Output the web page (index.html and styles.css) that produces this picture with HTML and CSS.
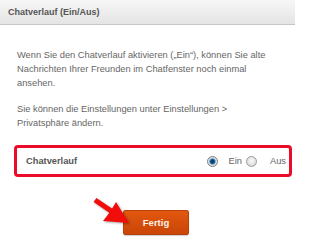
FILE: index.html
```html
<!DOCTYPE html>
<html lang="de">
<head>
<meta charset="utf-8">
<title>Chatverlauf</title>
<link rel="stylesheet" href="styles.css">
</head>
<body>
<div class="header">Chatverlauf (Ein/Aus)</div>
<div class="content">
  <p>Wenn Sie den Chatverlauf aktivieren („Ein“), können Sie alte Nachrichten Ihrer Freunden im Chatfenster noch einmal ansehen.</p>
  <p>Sie können die Einstellungen unter Einstellungen &gt; Privatsphäre ändern.</p>
</div>
<div class="box">
  <span class="label">Chatverlauf</span>
  <span class="spacer"></span>
  <span class="radio checked"></span>
  <span class="opt">Ein</span>
  <span class="radio"></span>
  <span class="opt last">Aus</span>
</div>
<div class="actions">
  <svg class="arrow" width="50" height="35" viewBox="0 0 50 35">
    <polygon points="11.4,2.9 27.1,13.5 31,7 44,28 18,26 24.3,17.7 8.6,7.1" fill="#f20d0d"/>
  </svg>
  <button class="btn">Fertig</button>
</div>
</body>
</html>
```

FILE: styles.css
```css
html, body {
  margin: 0;
  padding: 0;
  background: #fff;
}
body {
  font-family: "Liberation Sans", Arial, sans-serif;
  color: #666;
  width: 295px;
  height: 242px;
  overflow: hidden;
}
.header {
  height: 24px;
  line-height: 24px;
  padding-left: 8px;
  font-size: 9px;
  font-weight: bold;
  color: #555;
  background: linear-gradient(#f7f7f7, #e4e4e4);
  border-bottom: 1px solid #c6c6c6;
}
.content {
  padding: 23px 0 0 17px;
  width: 258px;
  font-size: 9.3px;
  line-height: 14px;
  color: #666;
}
.content p {
  margin: 0 0 12px 0;
}
.content p:last-child {
  margin-bottom: 0;
}
.box {
  margin: 15px 3px 0 14px;
  height: 26px;
  border: 3px solid #ec0c2a;
  border-radius: 4px;
  display: flex;
  align-items: center;
  padding: 0 3px 0 9px;
  font-size: 9.3px;
}
.label {
  font-weight: bold;
  color: #555;
}
.spacer {
  flex: 1;
}
.radio {
  width: 9px;
  height: 9px;
  border-radius: 50%;
  border: 1px solid #9a9a9a;
  background: radial-gradient(circle at 50% 40%, #fafafa, #cfcfcf);
  box-sizing: content-box;
  margin-right: 11px;
}
.radio.checked {
  background: radial-gradient(circle at 50% 50%, #0e3f6e 0, #0e3f6e 1.5px, #2f7bb8 2.6px, #c9d6e2 3.4px, #e6e6e6 4.5px);
  border-color: #7d7d7d;
  margin-right: 11px;
}
.opt {
  color: #666;
  margin-right: 4px;
}
.opt.last {
  margin-right: 0;
  margin-left: 2px;
}
.actions {
  position: relative;
  padding: 33px 0 0 123px;
}
.arrow {
  position: absolute;
  left: 85px;
  top: 18px;
  filter: drop-shadow(1px 1px 1px rgba(0,0,0,0.35));
  z-index: 2;
}
.btn {
  display: block;
  width: 66px;
  height: 25px;
  padding: 0;
  border: 1px solid #b8400a;
  border-radius: 2px;
  background: linear-gradient(#e2580f, #c94507);
  color: #fff3e6;
  font-family: "Liberation Sans", Arial, sans-serif;
  font-weight: bold;
  font-size: 9.5px;
  box-shadow: 0 1px 1px rgba(0,0,0,0.2);
}
```
